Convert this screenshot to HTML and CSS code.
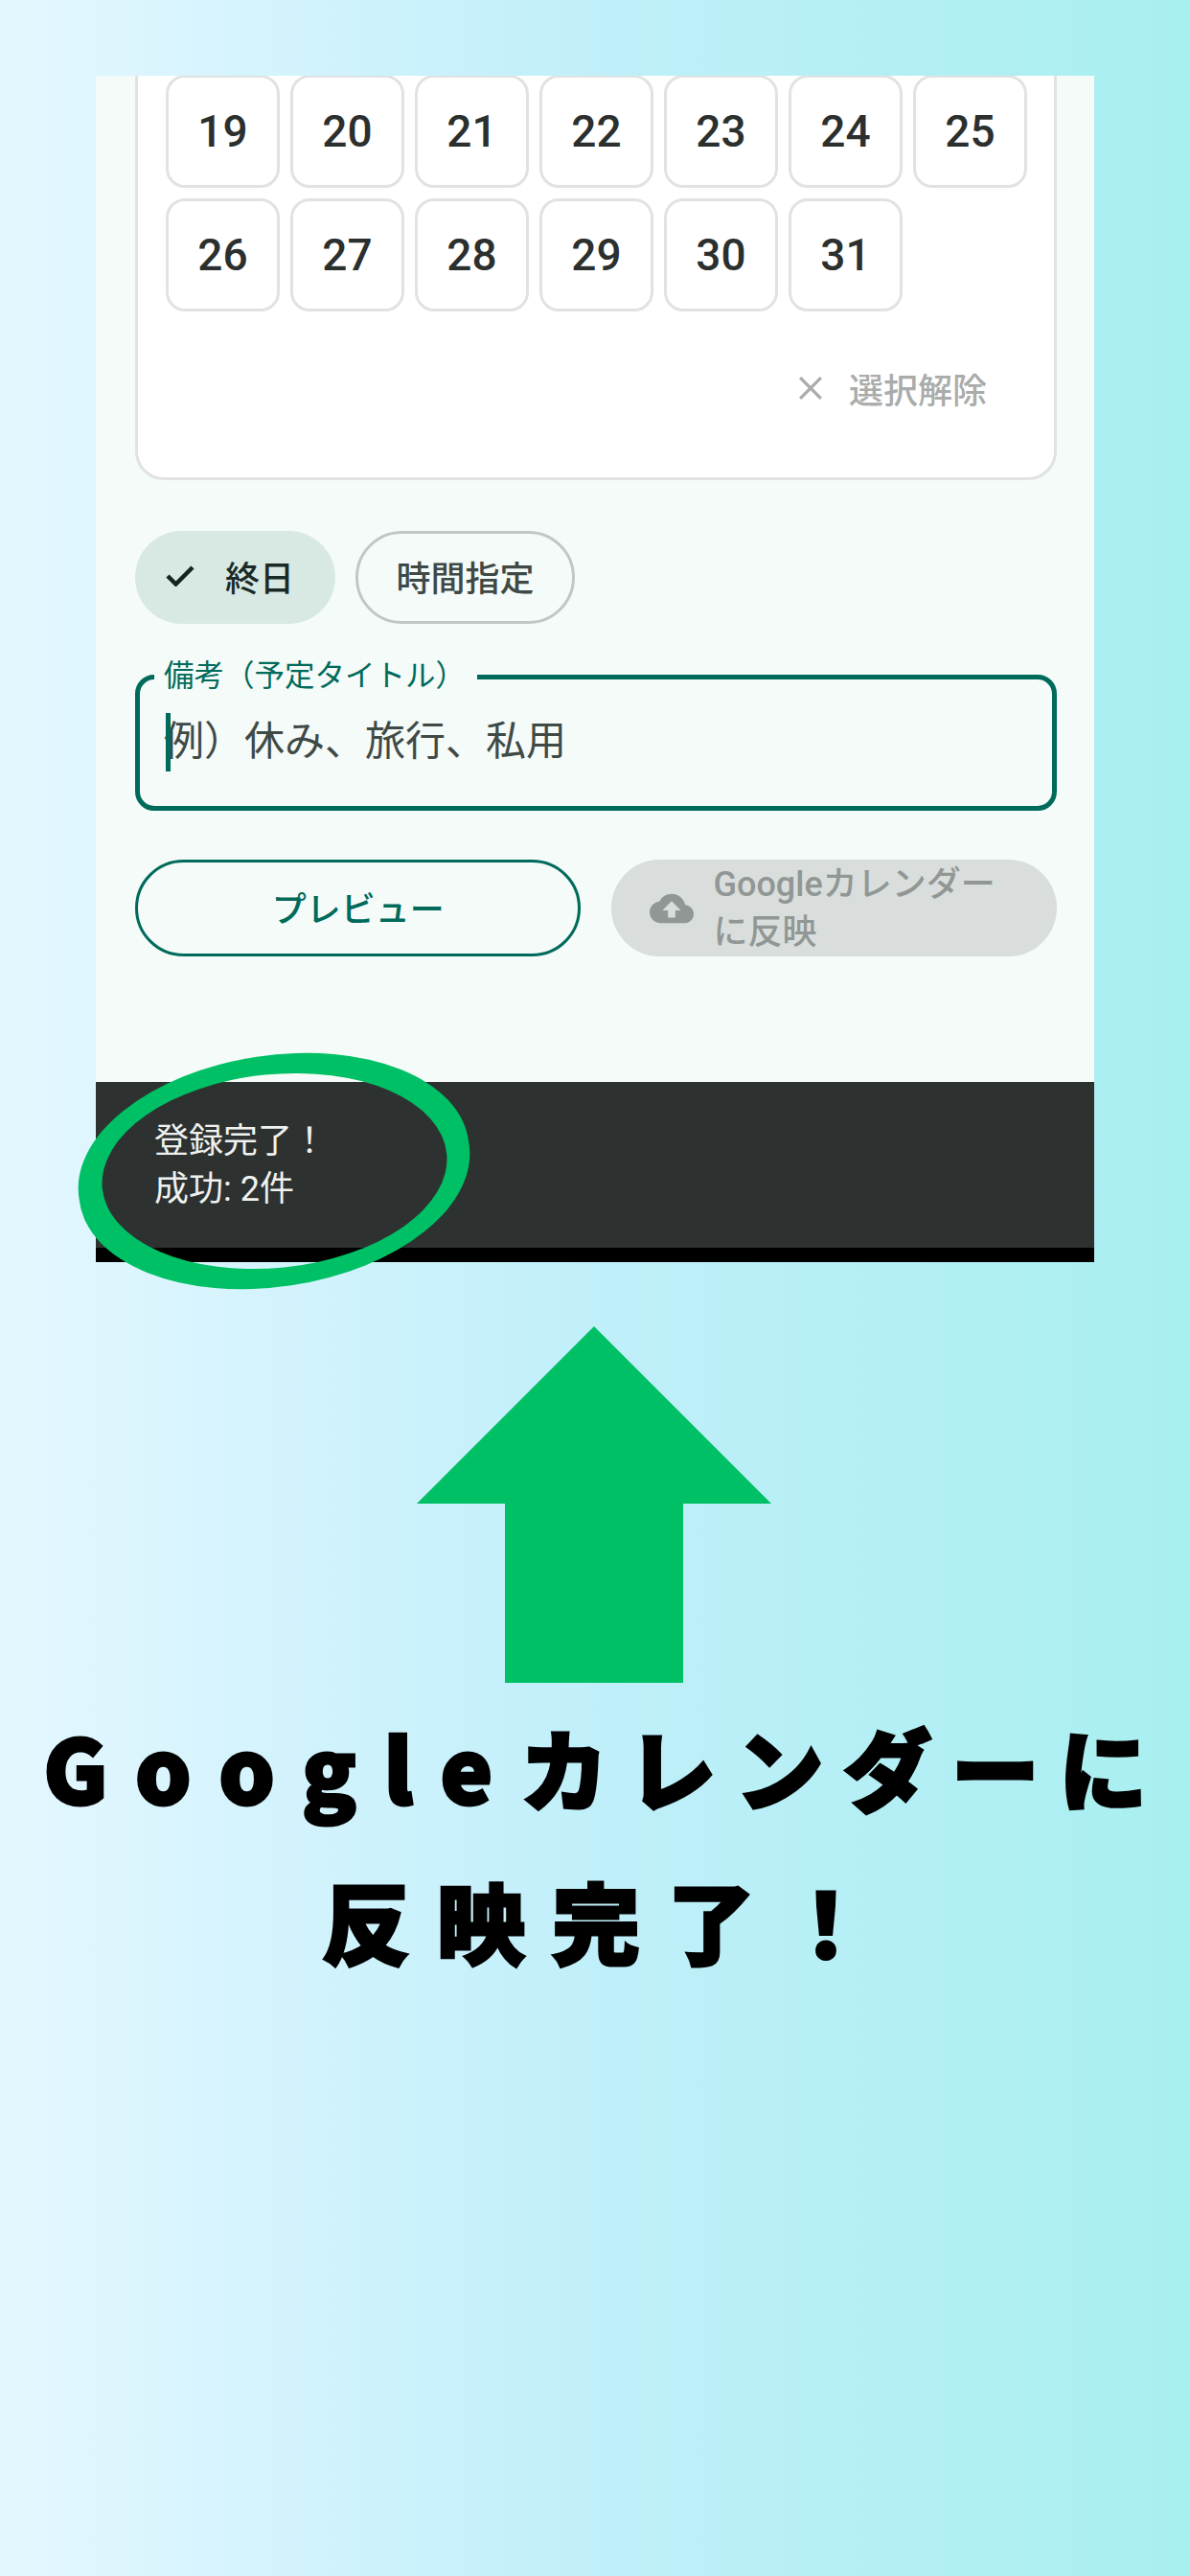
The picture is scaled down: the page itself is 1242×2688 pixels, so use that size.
FILE: index.html
```html
<!DOCTYPE html>
<html lang="ja">
<head>
<meta charset="utf-8">
<title>Googleカレンダーに反映完了！</title>
<link rel="stylesheet" href="styles.css">
</head>
<body>
<main class="page">
  <section class="phone">
    <div class="content">
      <div class="card">
        <div class="days">
          <button class="day">19</button><button class="day">20</button><button class="day">21</button><button class="day">22</button><button class="day">23</button><button class="day">24</button><button class="day">25</button>
          <button class="day">26</button><button class="day">27</button><button class="day">28</button><button class="day">29</button><button class="day">30</button><button class="day">31</button>
        </div>
        <div class="clear">
          <svg class="clear-icon" viewBox="0 0 24 24"><path d="M2 2 22 22M22 2 2 22"/></svg>
          <span>選択解除</span>
        </div>
      </div>
      <div class="chips">
        <div class="chip chip-on">
          <svg class="check" viewBox="0 0 30 22"><path d="M2 11 10.500 19.500 28 2"/></svg>
          <span>終日</span>
        </div>
        <div class="chip chip-off">時間指定</div>
      </div>
      <div class="field">
        <span class="field-label">備考（予定タイトル）</span>
        <span class="caret"></span>
        <span class="placeholder">例）休み、旅行、私用</span>
      </div>
      <div class="actions">
        <div class="btn btn-outline">プレビュー</div>
        <div class="btn btn-disabled">
          <svg class="cloud" viewBox="0 0 24 24"><path d="M19.350 10.040A7.490 7.490 0 0 0 12 4a7.500 7.500 0 0 0-6.650 4.040A5.990 5.990 0 0 0 0 14c0 3.310 2.690 6 6 6h13c2.760 0 5-2.240 5-5 0-2.640-2.050-4.780-4.650-4.960zM14 13v4h-4v-4H7l5-5 5 5h-3z"/></svg>
          <span class="btn-text">Googleカレンダー<br>に反映</span>
        </div>
      </div>
    </div>
    <div class="snackbar">登録完了！<br>成功: 2件</div>
    <div class="navbar"></div>
  </section>
  <svg class="ring" viewBox="0 0 1242 2688">
    <path fill-rule="evenodd" d="M489.200 1191.600A205.500 118.400 -8.500 1 1 82.800 1252.400A205.500 118.400 -8.500 1 1 489.200 1191.600ZM466.200 1203.800A180.600 100.900 -5.800 1 1 106.800 1240.200A180.600 100.900 -5.800 1 1 466.200 1203.800Z"/>
  </svg>
  <svg class="arrow" viewBox="0 0 370 372"><polygon points="185,0 370,185 278,185 278,372 92,372 92,185 0,185"/></svg>
  <h1 class="headline"><span class="line-one"><span class="latin">Google</span>カレンダーに</span><span class="line-two">反映完了！</span></h1>
</main>
</body>
</html>
```
FILE: styles.css
```css
* { box-sizing: border-box; }
html, body { margin: 0; padding: 0; }
body { font-family: Roboto, "Noto Sans CJK JP", sans-serif; }
.page {
  position: relative;
  width: 1242px;
  height: 2688px;
  overflow: hidden;
  padding-top: 79px;
  background: linear-gradient(90deg, #e4f7ff 0%, #c0effa 50%, #a8eff0 100%);
}
.phone {
  width: 1042px;
  height: 1238px;
  margin-left: 100px;
  display: flex;
  flex-direction: column;
  overflow: hidden;
  background: #f4fbf8;
}
.content {
  flex: 1;
  padding: 0 39px 0 41px;
  display: flex;
  flex-direction: column;
}
.card {
  height: 462px;
  margin-top: -40px;
  padding: 36px 29px 0 29px;
  background: #fff;
  border: 3px solid #e0e3e1;
  border-radius: 30px;
}
.days {
  display: grid;
  grid-template-columns: repeat(7, 119px);
  grid-auto-rows: 118px;
  gap: 11px;
}
.day {
  padding: 0;
  font: 500 46px Roboto, sans-serif;
  color: #2b2f2e;
  background: #fff;
  border: 3px solid #e0e3e1;
  border-radius: 20px;
}
.clear {
  display: flex;
  align-items: center;
  justify-content: flex-end;
  gap: 27px;
  margin-top: 54px;
  padding-right: 41px;
  font-size: 36px;
  font-weight: 500;
  color: #a9acab;
}
.clear-icon { width: 26px; height: 26px; }
.clear-icon path { fill: none; stroke: #a9acab; stroke-width: 3; }
.chips { display: flex; gap: 21px; margin-top: 53px; }
.chip {
  height: 97px;
  padding-bottom: 4px;
  border-radius: 49px;
  display: flex;
  align-items: center;
  font-size: 36px;
  font-weight: 500;
  color: #3f4946;
}
.chip-on {
  width: 209px;
  padding-left: 32px;
  gap: 32px;
  color: #1a2b27;
  background: #d8e9e4;
}
.check { width: 30px; height: 22px; }
.check path { fill: none; stroke: #16241f; stroke-width: 4.500; }
.chip-off {
  width: 229px;
  justify-content: center;
  border: 3px solid #c2c7c5;
}
.field {
  position: relative;
  height: 142px;
  margin-top: 53px;
  padding: 0 0 11px 25px;
  border: 5px solid #006a5b;
  border-radius: 20px;
  display: flex;
  align-items: center;
}
.field-label {
  position: absolute;
  left: 15px;
  top: -21px;
  padding: 0 12px 0 10px;
  font-size: 31.500px;
  line-height: 36px;
  color: #006a5b;
  background: #f4fbf8;
}
.caret {
  position: absolute;
  left: 27px;
  top: 35px;
  width: 5px;
  height: 61px;
  background: #006a5b;
}
.placeholder { font-size: 42px; color: #3f4946; }
.actions { display: flex; gap: 32px; margin-top: 51px; }
.btn {
  height: 101px;
  border-radius: 51px;
  display: flex;
  align-items: center;
}
.btn-outline {
  width: 466px;
  padding-bottom: 4px;
  justify-content: center;
  border: 3px solid #006a5b;
  font-size: 36px;
  font-weight: 500;
  color: #006a5b;
}
.btn-disabled {
  width: 465px;
  padding-left: 40px;
  gap: 20px;
  background: #d9dedc;
  color: #919795;
}
.cloud { width: 46px; height: 46px; flex: none; fill: #919795; }
.btn-text { font-size: 36px; font-weight: 500; line-height: 50px; white-space: nowrap; }
.snackbar {
  height: 173px;
  padding: 37px 0 0 61px;
  font-size: 36px;
  line-height: 50px;
  color: #eff1ef;
  background: #2d3130;
}
.navbar { height: 15px; background: #000; }
.ring {
  position: absolute;
  left: 0;
  top: 0;
  width: 1242px;
  height: 2688px;
  fill: #00c065;
}
.arrow {
  position: absolute;
  left: 435px;
  top: 1384px;
  width: 370px;
  height: 372px;
  fill: #00c065;
}
.headline {
  position: absolute;
  left: 0;
  top: 1763px;
  width: 1242px;
  margin: 0;
  font-family: "Noto Sans CJK JP", sans-serif;
  font-size: 92px;
  font-weight: 900;
  line-height: 160px;
  text-align: center;
  color: #000;
  -webkit-text-stroke: 3px #000;
}
.line-one { display: block; padding-left: 21px; letter-spacing: 20.500px; white-space: nowrap; }
.latin { letter-spacing: 28.500px; }
.line-two { display: block; padding-left: 30px; letter-spacing: 28px; }
```
